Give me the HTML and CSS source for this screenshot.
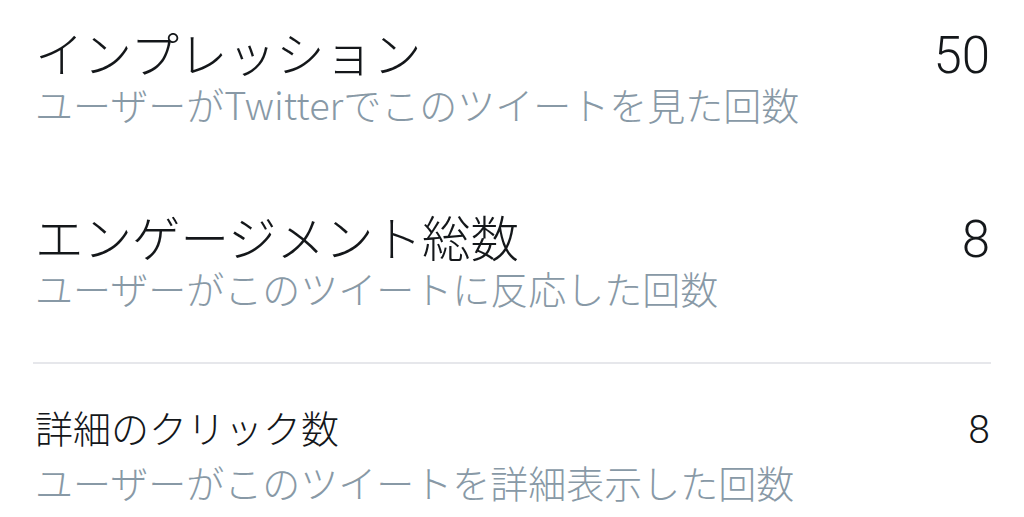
FILE: index.html
```
<!DOCTYPE html>
<html lang="ja">
<head>
  <meta charset="UTF-8" />
  <title>ツイートアクティビティ</title>
  <link rel="stylesheet" href="styles.css">
</head>
<body>
  <ul class="stats">
    <li class="stat">
      <div class="stat-text">
        <div class="stat-title">インプレッション</div>
        <div class="stat-desc">ユーザーがTwitterでこのツイートを見た回数</div>
      </div>
      <div class="stat-value">50</div>
    </li>
    <li class="stat">
      <div class="stat-text">
        <div class="stat-title">エンゲージメント総数</div>
        <div class="stat-desc">ユーザーがこのツイートに反応した回数</div>
      </div>
      <div class="stat-value">8</div>
    </li>
  </ul>

  <ul class="stats stats-detail">
    <li class="stat stat-small">
      <div class="stat-text">
        <div class="stat-title">詳細のクリック数</div>
        <div class="stat-desc">ユーザーがこのツイートを詳細表示した回数</div>
      </div>
      <div class="stat-value">8</div>
    </li>
  </ul>
</body>
</html>
```

FILE: styles.css
```
body {
  margin: 0;
  background: #fff;
  font-family: "Noto Sans CJK JP", "Noto Sans", sans-serif;
  color: #14171a;
  overflow: hidden;
}
.stats {
  list-style: none;
  margin: 0 33px;
  padding: 25px 0 0;
}
.stat {
  display: flex;
  justify-content: space-between;
  align-items: baseline;
  padding-left: 2px;
}
.stat + .stat {
  margin-top: 80px;
}
.stat-title {
  font-size: 48.5px;
  line-height: 54px;
  font-weight: 300;
}
.stat-desc {
  font-size: 38px;
  line-height: 50px;
  color: #8899a6;
  font-weight: 300;
}
.stat-value {
  font-family: Roboto, "Liberation Sans", sans-serif;
  font-weight: 300;
  font-size: 51px;
  line-height: 54px;
  padding-right: 1px;
}
/* second block, split off by a thin rule */
.stats-detail {
  margin-top: 49px;
  padding-top: 33px;
  border-top: 2px solid #e6e7eb;
}
.stat-small .stat-title {
  font-size: 38px;
  line-height: 60px;
}
.stat-small .stat-value {
  font-size: 39px;
}
```
